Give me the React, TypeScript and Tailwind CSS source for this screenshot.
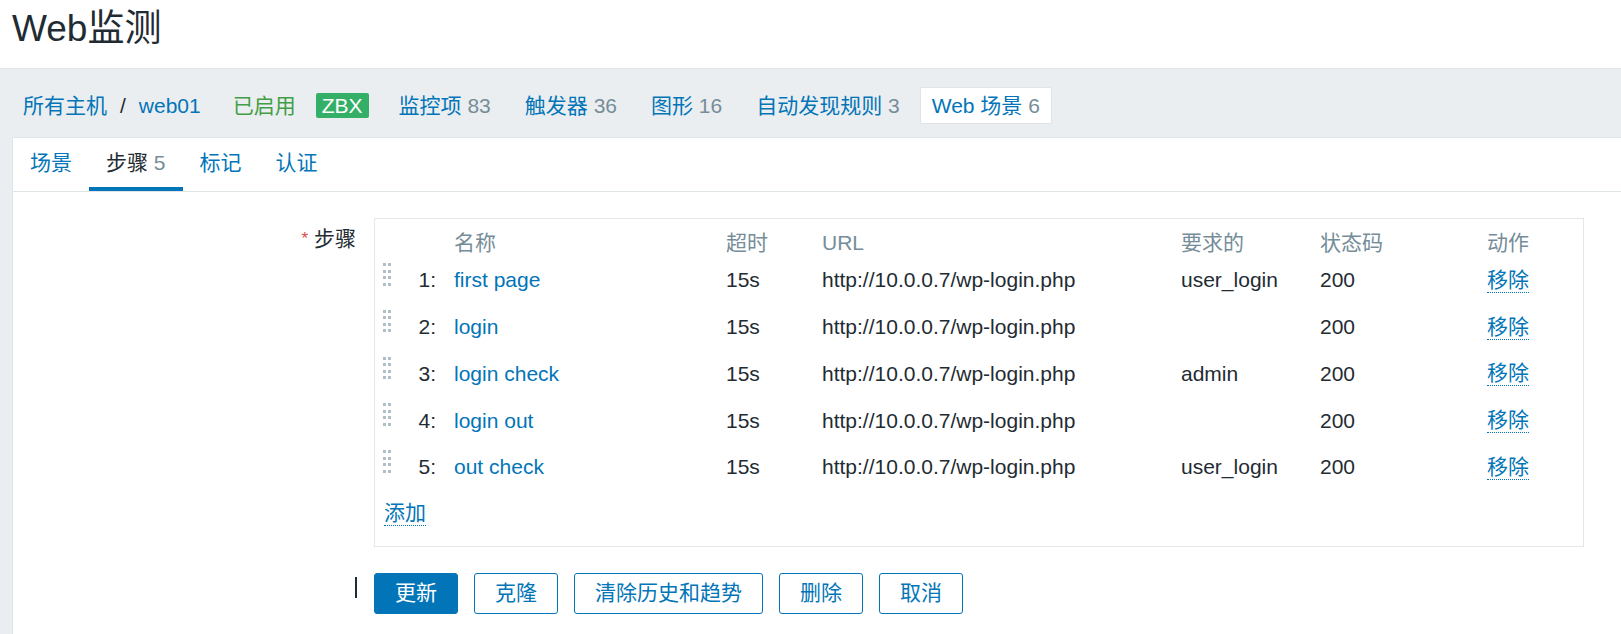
import React from 'react';

const steps = [
  { no: 1, name: 'first page', timeout: '15s', url: 'http://10.0.0.7/wp-login.php', required: 'user_login', status: '200' },
  { no: 2, name: 'login', timeout: '15s', url: 'http://10.0.0.7/wp-login.php', required: '', status: '200' },
  { no: 3, name: 'login check', timeout: '15s', url: 'http://10.0.0.7/wp-login.php', required: 'admin', status: '200' },
  { no: 4, name: 'login out', timeout: '15s', url: 'http://10.0.0.7/wp-login.php', required: '', status: '200' },
  { no: 5, name: 'out check', timeout: '15s', url: 'http://10.0.0.7/wp-login.php', required: 'user_login', status: '200' },
];

function DragHandle () {
  return (
    <div className="grid grid-cols-[3px_3px] gap-x-[2px] gap-y-[3.5px] mb-[12px]">
      {Array.from({ length: 8 }).map((_, i) => (
        <span key={i} className="block w-[3px] h-[3px] bg-[#b0bec5]" />
      ))}
    </div>
  );
}

function Count ({ n }: { n: number }) {
  return <span className="text-[#768d99]"> {n}</span>;
}

export default function App () {
  return (
    <div className="h-[634px] overflow-hidden bg-white font-['Liberation_Sans','Noto_Sans_CJK_SC',sans-serif] text-[21px] leading-[24px] text-[#1f2c33] flex flex-col">
      <header className="h-[68px] shrink-0 flex items-center pl-3 pb-[12px]">
        <h1 className="text-[37px] leading-none font-normal">Web监测</h1>
      </header>

      <div className="flex-1 flex flex-col bg-[#ebeef0] border-t border-[#dfe4e7] pl-3">
        <nav className="h-[68px] shrink-0 flex items-center pt-[5px] pl-[11px] whitespace-nowrap">
          <a className="text-[#0275b8]">所有主机</a>
          <span className="mx-[13px]">/</span>
          <a className="text-[#0275b8]">web01</a>
          <span className="ml-[32px] text-[#429e47]">已启用</span>
          <span className="ml-[20px] px-[6px] py-[2px] leading-[21px] rounded-[2px] bg-[#34af67] text-white">ZBX</span>
          <a className="ml-[30px] text-[#0275b8]">监控项<Count n={83} /></a>
          <a className="ml-[34px] text-[#0275b8]">触发器<Count n={36} /></a>
          <a className="ml-[34px] text-[#0275b8]">图形<Count n={16} /></a>
          <a className="ml-[34px] text-[#0275b8]">自动发现规则<Count n={3} /></a>
          <span className="ml-[20px] h-[37px] flex items-center px-[11px] bg-white border border-[#dfe4e7] rounded-[2px] text-[#0275b8]">
            <span>Web 场景<Count n={6} /></span>
          </span>
        </nav>

        <div className="flex-1 bg-white border-t border-l border-[#dfe4e7]">
          <ul className="flex border-b border-[#dfe4e7]">
            <li className="h-[53px] flex items-center px-[17px] border-b-4 border-transparent text-[#0275b8]">场景</li>
            <li className="h-[53px] flex items-center px-[17px] border-b-4 border-[#0275b8]">
              <span>步骤<Count n={5} /></span>
            </li>
            <li className="h-[53px] flex items-center px-[17px] border-b-4 border-transparent text-[#0275b8]">标记</li>
            <li className="h-[53px] flex items-center px-[17px] border-b-4 border-transparent text-[#0275b8]">认证</li>
          </ul>

          <div className="pt-[26px] pr-[37px]">
            <div className="flex gap-[18px]">
              <div className="w-[343px] shrink-0 text-right pt-[9px]">
                <span className="text-[#e04b4b] text-[17px] align-top mr-[6px]">*</span>步骤
              </div>
              <div className="flex-1 border border-[#e3e7ea] pl-[8px] pt-[10px] pb-[9px]">
                <div className="h-[28px] flex items-center text-[#768d99]">
                  <div className="w-[24px]" />
                  <div className="w-[29px]" />
                  <div className="w-[290px] pl-[18px]">名称</div>
                  <div className="w-[96px]">超时</div>
                  <div className="w-[359px]">URL</div>
                  <div className="w-[139px]">要求的</div>
                  <div className="w-[167px]">状态码</div>
                  <div>动作</div>
                </div>
                {steps.map((s) => (
                  <div key={s.no} className="h-[46.75px] flex items-center">
                    <div className="w-[24px]"><DragHandle /></div>
                    <div className="w-[29px] text-right">{s.no}:</div>
                    <div className="w-[290px] pl-[18px] text-[#0275b8]">{s.name}</div>
                    <div className="w-[96px]">{s.timeout}</div>
                    <div className="w-[359px]">{s.url}</div>
                    <div className="w-[139px]">{s.required}</div>
                    <div className="w-[167px]">{s.status}</div>
                    <div>
                      <a className="inline-block text-[#0275b8] border-b border-dotted border-[#0275b8]">移除</a>
                    </div>
                  </div>
                ))}
                <div className="h-[46px] flex items-center pl-[1px]">
                  <a className="inline-block text-[#0275b8] border-b border-dotted border-[#0275b8]">添加</a>
                </div>
              </div>
            </div>

            <div className="flex gap-[18px] mt-[26px]">
              <div className="w-[343px] shrink-0 flex justify-end">
                <span className="block w-[2px] h-[21px] mt-[4px] -mr-[1px] bg-[#1f2c33]" />
              </div>
              <div className="flex gap-[16px]">
                <button className="h-[41px] px-[20px] rounded-[3px] border border-[#0275b8] bg-[#0275b8] text-white">更新</button>
                <button className="h-[41px] px-[20px] rounded-[3px] border border-[#0275b8] bg-white text-[#0275b8]">克隆</button>
                <button className="h-[41px] px-[20px] rounded-[3px] border border-[#0275b8] bg-white text-[#0275b8]">清除历史和趋势</button>
                <button className="h-[41px] px-[20px] rounded-[3px] border border-[#0275b8] bg-white text-[#0275b8]">删除</button>
                <button className="h-[41px] px-[20px] rounded-[3px] border border-[#0275b8] bg-white text-[#0275b8]">取消</button>
              </div>
            </div>
          </div>
        </div>
      </div>
    </div>
  );
}
